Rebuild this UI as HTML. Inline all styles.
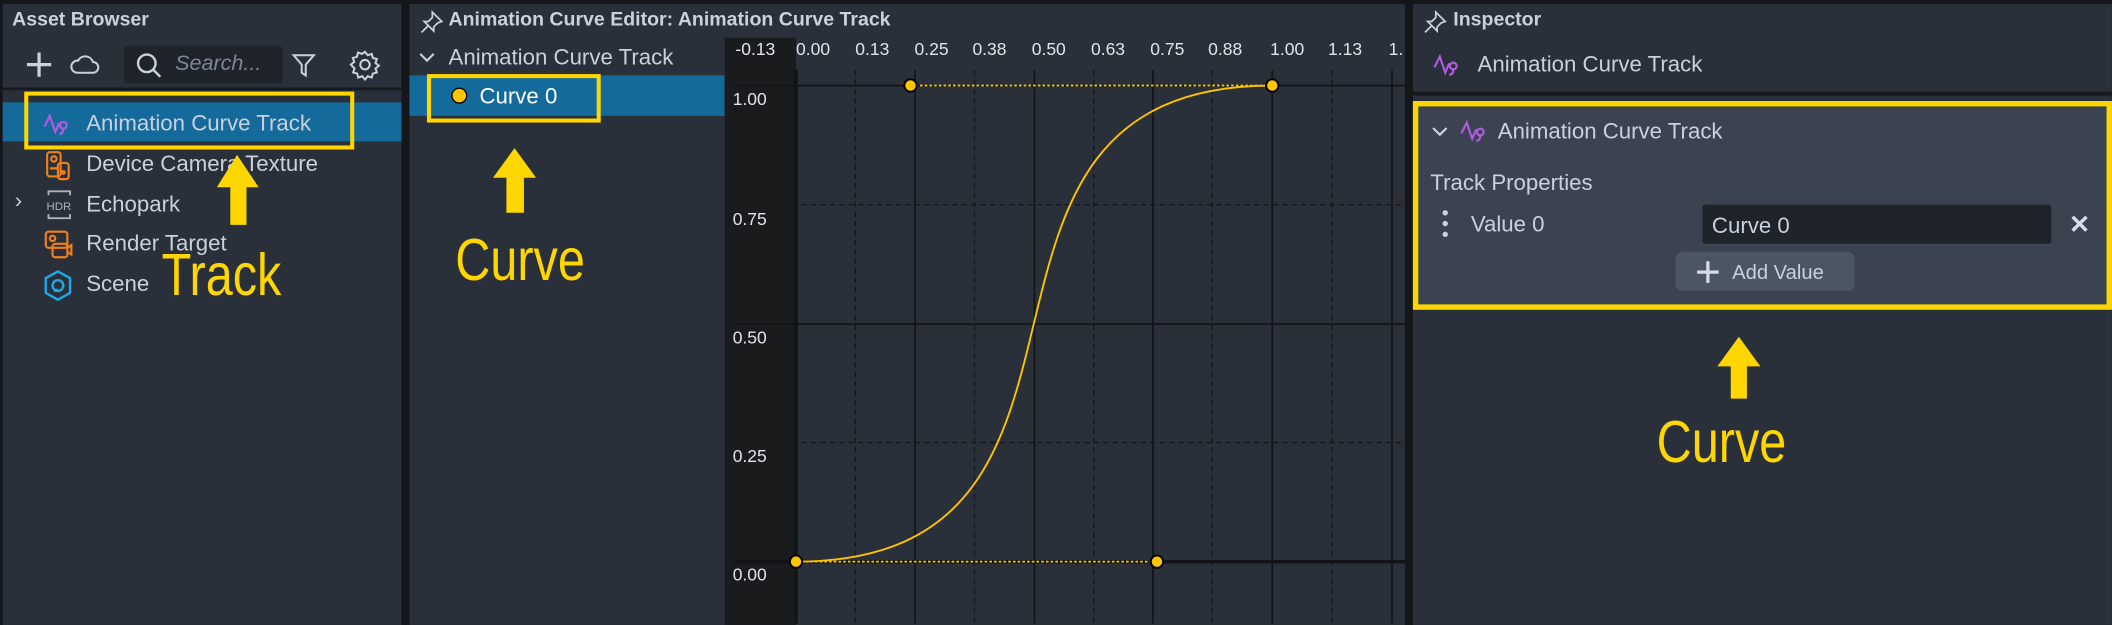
<!DOCTYPE html>
<html><head><meta charset="utf-8"><style>
html,body{margin:0;padding:0;background:#14161a;overflow:hidden;width:2112px;height:624px}
#s{position:absolute;left:0;top:0;width:1568px;height:463.3px;transform:scale(1.3469,1.3469);transform-origin:0 0;font-family:"Liberation Sans",sans-serif;color:#c9d1dc}
.p{position:absolute;background:#2a3039}
.a{position:absolute;white-space:nowrap}
.t{font-weight:bold;font-size:14.5px;color:#c9d1dc}
.li{font-size:16.5px;color:#c9d1dc}
.big{font-size:44px;color:#ffd600;transform:scaleX(0.82);transform-origin:0 0}
</style></head><body><div id="s">
<!-- panel 1 -->
<div class="p" style="left:2px;top:3px;width:296px;height:461px"></div>
<div class="a t" style="left:9px;top:7px">Asset Browser</div>
<svg class="a" style="left:18px;top:36px" width="250" height="24" viewBox="0 0 250 24" fill="none" stroke="#c9d1dc" stroke-width="2">
<path d="M11 3v18M2 12h18" stroke-width="2.4"/>
<path d="M39 18h12a4 4 0 0 0 0-8 6 6 0 0 0-11-1 4.5 4.5 0 0 0-1 9z" stroke-width="1.5"/>
<path d="M200 5h15l-6 7v8l-3-2v-6z" stroke-width="1.5"/>
</svg>
<div class="a" style="left:92px;top:34px;width:118px;height:28px;background:#1f242b;border-radius:3px"></div>
<svg class="a" style="left:100px;top:38px" width="22" height="22" fill="none" stroke="#c9d1dc" stroke-width="1.8"><circle cx="9" cy="9" r="6.5"/><path d="M14 14l5 5"/></svg>
<div class="a" style="left:130px;top:39px;font-size:16px;font-style:italic;color:#7d8694">Search...</div>
<svg class="a" style="left:259px;top:36px" width="24" height="24" fill="none" stroke="#c9d1dc" stroke-width="1.5"><circle cx="12" cy="12" r="3.5"/><path d="M12 2.5l2 2.5 3-1 .8 3 3 .8-1 3 2.5 2-2.5 2 1 3-3 .8-.8 3-3-1-2 2.5-2-2.5-3 1-.8-3-3-.8 1-3L1.5 12 4 10l-1-3 3-.8L6.8 3l3 1z"/></svg>
<div class="a" style="left:2px;top:65px;width:296px;height:2px;background:#16191d"></div>
<div class="a" style="left:2px;top:76px;width:296px;height:29px;background:#156a9c"></div>
<div class="a" style="left:18px;top:68px;width:239px;height:37px;border:3.5px solid #ffd600"></div>
<svg class="a" style="left:32px;top:83px" width="22" height="18" fill="none" stroke="#b05be0" stroke-width="1.6"><path d="M1 11l4-8 4 12 3-7"/><circle cx="15" cy="10" r="2.5"/><path d="M15 12.5q0 4-3 4"/></svg>
<div class="a li" style="left:64px;top:83px">Animation Curve Track</div>
<svg class="a" style="left:34px;top:111px" width="20" height="24" fill="none" stroke="#f07f1f" stroke-width="1.6"><rect x="1" y="2" width="10" height="18" rx="2"/><circle cx="6" cy="7" r="2"/><path d="M3 14h6"/><rect x="9" y="10" width="8" height="12" rx="2"/><circle cx="13" cy="17" r="1"/></svg>
<div class="a li" style="left:64px;top:113px">Device Camera Texture</div>
<div class="a" style="left:11px;top:141px;font-size:16px;color:#c9d1dc">›</div>
<svg class="a" style="left:33px;top:140px" width="22" height="24" fill="none" stroke="#aab3c0" stroke-width="1.4"><path d="M3 5V2h16v3M3 19v3h16v-3"/><text x="1.5" y="16" font-size="8.5" font-family="Liberation Sans" fill="#aab3c0" stroke="none">HDR</text></svg>
<div class="a li" style="left:64px;top:143px">Echopark</div>
<svg class="a" style="left:33px;top:170px" width="22" height="24" fill="none" stroke="#f07f1f" stroke-width="1.6"><rect x="1" y="2" width="16" height="12" rx="2"/><circle cx="6" cy="7" r="2"/><rect x="6" y="11" width="11" height="10" rx="2"/><path d="M17 14l3-2v7l-3-2"/></svg>
<div class="a li" style="left:64px;top:172px">Render Target</div>
<svg class="a" style="left:32px;top:200px" width="22" height="24" fill="none" stroke="#21a7e6" stroke-width="1.8"><path d="M11 1.5l9 5v11l-9 5-9-5v-11z"/><circle cx="11" cy="12" r="4"/><path d="M8 16l3 -1"/></svg>
<div class="a li" style="left:64px;top:202px">Scene</div>
<svg class="a" style="left:158px;top:113px" width="40" height="56"><path d="M18 2L34 26H25V54H13V26H3z" fill="#ffd600"/></svg>
<div class="a big" style="left:120px;top:180px">Track</div>

<!-- panel 2 -->
<div class="p" style="left:304px;top:3px;width:739px;height:461px"></div>
<svg class="a" style="left:312px;top:7px" width="18" height="18" fill="none" stroke="#c9d1dc" stroke-width="1.3"><path d="M9 2l7 7-3 1-3 3 0 3-7-7 3 0 3-3z M6 12l-5 5"/></svg>
<div class="a t" style="left:333px;top:7px">Animation Curve Editor: Animation Curve Track</div>
<svg class="a" style="left:310px;top:38px" width="14" height="10" fill="none" stroke="#c9d1dc" stroke-width="1.6"><path d="M2 2l5 5 5-5"/></svg>
<div class="a" style="left:333px;top:34px;font-size:16.5px">Animation Curve Track</div>
<div class="a" style="left:304px;top:56px;width:234px;height:30px;background:#156a9c"></div>
<div class="a" style="left:317px;top:55px;width:123px;height:30px;border:3.5px solid #ffd600"></div>
<div class="a" style="left:335px;top:65px;width:12px;height:12px;box-sizing:border-box;border-radius:50%;background:#ffc400;border:1.5px solid #000"></div>
<div class="a" style="left:356px;top:63px;font-size:16.5px;color:#fff">Curve 0</div>
<svg class="a" style="left:364px;top:108px" width="40" height="52"><path d="M18 2L34 24H25V50H12V24H2z" fill="#ffd600"/></svg>
<div class="a big" style="left:338px;top:169px">Curve</div>

<!-- graph -->
<svg class="a" style="left:538px;top:28px" width="505" height="436" viewBox="538 28 505 436">
<rect x="538" y="28" width="505" height="436" fill="#2a3039"/>
<rect x="538" y="28" width="53" height="436" fill="#1a1b1d"/>
<g stroke="#15171a" stroke-width="1" stroke-dasharray="4 3">
<path d="M546 52V463M635 52V463M723.5 52V463M812 52V463M900 52V463M989 52V463M546 152H1043M546 328.6H1043"/>
</g>
<g stroke="#111316" stroke-width="1.2">
<path d="M591 52V463M679.4 52V463M768 52V463M856 52V463M944.6 52V463M1033.5 52V463M546 63.5H1043M546 240.6H1043"/>
<path d="M546 417H1043" stroke-width="2.5"/>
<path d="M591 52V463" stroke-width="2.5"/>
</g>
<g font-family="Liberation Sans" font-size="13" fill="#e0e4ea">
<text x="546" y="41">-0.13</text><text x="591" y="41">0.00</text><text x="635" y="41">0.13</text><text x="679" y="41">0.25</text><text x="722" y="41">0.38</text><text x="766" y="41">0.50</text><text x="810" y="41">0.63</text><text x="854" y="41">0.75</text><text x="897" y="41">0.88</text><text x="943" y="41">1.00</text><text x="986" y="41">1.13</text><text x="1031" y="41">1.</text>
<text x="544" y="78">1.00</text><text x="544" y="167">0.75</text><text x="544" y="255">0.50</text><text x="544" y="343">0.25</text><text x="544" y="431">0.00</text>
</g>
<g stroke="#ffc800" stroke-width="1.3" stroke-dasharray="2 1.5"><path d="M591 417H859M676 63.5H944.6"/></g>
<path d="M591 417C859 417 676 63.5 944.6 63.5" fill="none" stroke="#ffc400" stroke-width="1.4"/>
<g fill="#ffc400" stroke="#000" stroke-width="1.4"><circle cx="591" cy="417" r="4.6"/><circle cx="859" cy="417" r="4.6"/><circle cx="676" cy="63.5" r="4.6"/><circle cx="944.6" cy="63.5" r="4.6"/></g>
</svg>

<!-- panel 3 -->
<div class="p" style="left:1049px;top:3px;width:519px;height:461px"></div>
<svg class="a" style="left:1057px;top:7px" width="18" height="18" fill="none" stroke="#c9d1dc" stroke-width="1.3"><path d="M9 2l7 7-3 1-3 3 0 3-7-7 3 0 3-3z M6 12l-5 5"/></svg>
<div class="a t" style="left:1079px;top:7px">Inspector</div>
<svg class="a" style="left:1064px;top:39px" width="22" height="18" fill="none" stroke="#b05be0" stroke-width="1.6"><path d="M1 11l4-8 4 12 3-7"/><circle cx="15" cy="10" r="2.5"/><path d="M15 12.5q0 4-3 4"/></svg>
<div class="a li" style="left:1097px;top:39px">Animation Curve Track</div>
<div class="a" style="left:1049px;top:68px;width:519px;height:3px;background:#16191d"></div>
<div class="a" style="left:1049px;top:75px;width:519px;height:155px;background:#3c4350;box-sizing:border-box;border:4px solid #ffd600"></div>
<svg class="a" style="left:1062px;top:93px" width="14" height="10" fill="none" stroke="#c9d1dc" stroke-width="1.6"><path d="M2 2l5 5 5-5"/></svg>
<svg class="a" style="left:1084px;top:88px" width="22" height="18" fill="none" stroke="#b05be0" stroke-width="1.6"><path d="M1 11l4-8 4 12 3-7"/><circle cx="15" cy="10" r="2.5"/><path d="M15 12.5q0 4-3 4"/></svg>
<div class="a li" style="left:1112px;top:89px">Animation Curve Track</div>
<div class="a li" style="left:1062px;top:127px">Track Properties</div>
<svg class="a" style="left:1069px;top:155px" width="8" height="24" fill="#c9d1dc"><circle cx="4" cy="3" r="2"/><circle cx="4" cy="11" r="2"/><circle cx="4" cy="19" r="2"/></svg>
<div class="a li" style="left:1092px;top:158px">Value 0</div>
<div class="a" style="left:1264px;top:152px;width:259px;height:29px;background:#1f232a;border-radius:2px"></div>
<div class="a li" style="left:1271px;top:159px">Curve 0</div>
<div class="a" style="left:1536px;top:156px;font-size:19px;font-weight:bold;color:#d8dde5">✕</div>
<div class="a" style="left:1244px;top:187px;width:133px;height:29px;background:#4c5563;border-radius:5px"></div>
<svg class="a" style="left:1258px;top:192px" width="20" height="20" stroke="#d8dde5" stroke-width="2.4"><path d="M10 2v16M2 10h16"/></svg>
<div class="a" style="left:1286px;top:194px;font-size:15px;color:#c9d1dc">Add Value</div>
<svg class="a" style="left:1273px;top:248px" width="40" height="50"><path d="M18 2L34 24H24V48H12V24H2z" fill="#ffd600"/></svg>
<div class="a big" style="left:1230px;top:304px">Curve</div>
</div></body></html>
